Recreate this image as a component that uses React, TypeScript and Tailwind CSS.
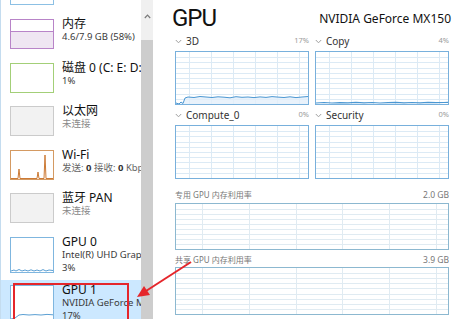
import React from "react";

type GP = {
  w: number;
  h: number;
  vOff: number;
  vStep: number;
  hN: number;
  grid: string;
  children?: React.ReactNode;
};

function GridSvg({ w, h, vOff, vStep, hN, grid, children }: GP) {
  const vs: number[] = [];
  for (let x = vOff; x < w; x += vStep) vs.push(Math.round(x) + 0.5);
  const hs: number[] = [];
  for (let i = 1; i < hN; i++) hs.push(Math.round((i * h) / hN) + 0.5);
  return (
    <svg width={w} height={h} className="block">
      {hs.map((y, i) => (
        <line key={"h" + i} x1={0} x2={w} y1={y} y2={y} stroke={grid} strokeWidth={1} />
      ))}
      {vs.map((x, i) => (
        <line key={"v" + i} x1={x} x2={x} y1={0} y2={h} stroke={grid} strokeWidth={1} />
      ))}
      {children}
    </svg>
  );
}

const Chev = () => (
  <svg width="7" height="5" viewBox="0 0 7 5" className="mr-[4px] shrink-0">
    <polyline points="0.8,1 3.5,3.8 6.2,1" fill="none" stroke="#a0a0a0" strokeWidth="1" />
  </svg>
);

function Item({
  thumb,
  title,
  lines,
  selected,
  h,
  th,
}: {
  thumb: React.ReactNode;
  title?: string;
  lines: React.ReactNode[];
  selected?: boolean;
  h: string;
  th: string;
}) {
  return (
    <div className={"flex shrink-0 pl-[9px] pt-[5px] " + h + " " + (selected ? "bg-[#cce8ff]" : "")}>
      <div className={"w-[44px] shrink-0 " + th}>{thumb}</div>
      <div className="ml-[8px] flex flex-col whitespace-nowrap mt-[-2px]">
        {title && <div className="text-[12px] leading-[14px] text-[#111]">{title}</div>}
        {lines.map((l, i) => (
          <div key={i} className="text-[9.5px] leading-[12.5px] text-[#3a3a3a]">
            {l}
          </div>
        ))}
      </div>
    </div>
  );
}

const pts3D =
  "0,51 3,52 5,50 7,51.5 9,46 12,45 18,45.5 24,44.5 30,45 36,45.5 42,44.8 48,45.2 54,45.8 60,44.7 66,45.3 72,45 78,45.6 84,44.9 90,45.4 96,44.6 102,45.1 108,45.5 114,44.8 120,45.6 126,45 132,44.5";
const ptsCopy =
  "0,51 8,50.5 16,51 24,50.6 32,50.9 40,50.4 48,50.8 56,50.5 64,51 72,50.6 80,50.3 88,50.8 96,50.5 104,50.9 112,50.4 120,50.7 128,50.5 132,50.3";

export default function App() {
  const engGrid = "#dceaf5";
  const engBorder = "border-[#78b0dc]";
  const memGrid = "#e0ebf2";
  const memBorder = "border-[#8cb8d0]";
  return (
    <div className="relative w-[465px] h-[319px] overflow-hidden bg-white flex font-['Noto_Sans','Noto_Sans_CJK_SC',sans-serif]">
      <div className="w-[1px] shrink-0 bg-[#c4dcef]" />
      {/* sidebar */}
      <div className="w-[140px] shrink-0 overflow-hidden">
        <div className="mt-[-30px] flex flex-col">
          <Item
            h="h-[44px]"
            th="h-[30px]"
            thumb={<div className="w-full h-full border border-[#8cc0e4] bg-white" />}
            lines={[]}
          />
          <Item
            h="h-[44px]"
            th="h-[30px]"
            thumb={
              <div className="w-full h-full border border-[#b884c8] bg-white flex flex-col">
                <div className="flex-1" />
                <div className="h-[17px] bg-[#efe6f2] border-t border-[#b884c8]" />
              </div>
            }
            title="内存"
            lines={["4.6/7.9 GB (58%)"]}
          />
          <Item
            h="h-[43px]"
            th="h-[30px]"
            thumb={<div className="w-full h-full border border-[#a3cf78] bg-white" />}
            title="磁盘 0 (C: E: D:)"
            lines={["1%"]}
          />
          <Item
            h="h-[44px]"
            th="h-[30px]"
            thumb={<div className="w-full h-full border border-[#cbcbcb] bg-[#f2f2f2]" />}
            title="以太网"
            lines={[<span className="text-[#8a8a8a]">未连接</span>]}
          />
          <Item
            h="h-[43px]"
            th="h-[30px]"
            thumb={
              <div className="w-full h-full border border-[#d49a62] bg-white">
                <svg width="42" height="28" className="block">
                  <polyline
                    points="0,27.5 7,27.5 8,18 9,27.5 26,27.5 27,21 28,27.5 33,27.5 34,4 35,27.5 42,27.5"
                    fill="none"
                    stroke="#cc7a35"
                    strokeWidth="1"
                  />
                </svg>
              </div>
            }
            title="Wi-Fi"
            lines={[
              <span className="text-[#666]">
                发送: <b className="text-[#333]">0</b> 接收: <b className="text-[#333]">0</b> Kbps
              </span>,
            ]}
          />
          <Item
            h="h-[44px]"
            th="h-[30px]"
            thumb={<div className="w-full h-full border border-[#cbcbcb] bg-[#f2f2f2]" />}
            title="蓝牙 PAN"
            lines={[<span className="text-[#8a8a8a]">未连接</span>]}
          />
          <Item
            h="h-[48px]"
            th="h-[36px]"
            thumb={
              <div className="w-full h-full border border-[#7fb6df] bg-white">
                <svg width="42" height="34" className="block">
                  <polyline
                    points="0,33 3,32 5,33 8,31.5 11,33 14,32 17,33 20,31.8 23,33 26,32 29,33 32,31.6 35,33 38,32 42,32.5"
                    fill="none"
                    stroke="#5b9fd3"
                    strokeWidth="1"
                  />
                </svg>
              </div>
            }
            title="GPU 0"
            lines={["Intel(R) UHD Graphics 620", "3%"]}
          />
          <Item
            selected
            h="h-[48px]"
            th="h-[36px]"
            thumb={
              <div className="w-full h-full border border-[#7fb6df] bg-white">
                <svg width="42" height="34" className="block">
                  <polyline
                    points="0,33 4,32 8,29 12,28.5 18,29 24,28.6 30,29 36,28.4 42,28.8"
                    fill="none"
                    stroke="#5b9fd3"
                    strokeWidth="1"
                  />
                </svg>
              </div>
            }
            title="GPU 1"
            lines={["NVIDIA GeForce MX150", "17%"]}
          />
        </div>
      </div>
      {/* scrollbar */}
      <div className="w-[12px] shrink-0 flex flex-col bg-[#f0f0f0]">
        <div className="h-[40px] flex justify-center pt-[14px]">
          <svg width="7" height="5" viewBox="0 0 7 5">
            <polyline points="0.8,4 3.5,1.2 6.2,4" fill="none" stroke="#7a7a7a" strokeWidth="1.2" />
          </svg>
        </div>
        <div className="flex-1 bg-[#cdcdcd]" />
      </div>
      {/* main */}
      <div className="flex-1 pl-[22px] pr-[16px] flex flex-col">
        <div className="h-[31px] flex items-start justify-between">
          <div className="pt-[5px] ml-[-3px] text-[24px] leading-[26px] font-normal tracking-[-1px] text-[#111] font-['Roboto',sans-serif]">
            GPU
          </div>
          <div className="pt-[12px] mr-[-2px] text-[12px] leading-[14px] text-[#111]">NVIDIA GeForce MX150</div>
        </div>
        <div className="grid grid-cols-2 gap-x-[6px]">
          <div className="flex flex-col">
            <div className="h-[20px] flex items-center justify-between">
              <div className="flex items-center text-[10px] text-[#333]">
                <Chev />3D
              </div>
              <div className="text-[7.5px] text-[#9a9a9a]">17%</div>
            </div>
            <div className={"h-[54px] border bg-white " + engBorder}>
              <GridSvg w={132} h={52} vOff={13} vStep={22} hN={10} grid={engGrid}>
                <polygon points={pts3D + " 132,52 0,52"} fill="#e3effa" opacity="0.8" />
                <polyline points={pts3D} fill="none" stroke="#4b97d2" strokeWidth="1" />
              </GridSvg>
            </div>
          </div>
          <div className="flex flex-col">
            <div className="h-[20px] flex items-center justify-between">
              <div className="flex items-center text-[10px] text-[#333]">
                <Chev />Copy
              </div>
              <div className="text-[7.5px] text-[#9a9a9a]">4%</div>
            </div>
            <div className={"h-[54px] border bg-white " + engBorder}>
              <GridSvg w={132} h={52} vOff={13} vStep={22} hN={10} grid={engGrid}>
                <polyline points={ptsCopy} fill="none" stroke="#4b97d2" strokeWidth="1.2" />
              </GridSvg>
            </div>
          </div>
          <div className="flex flex-col">
            <div className="h-[20px] flex items-center justify-between">
              <div className="flex items-center text-[10px] text-[#333]">
                <Chev />Compute_0
              </div>
              <div className="text-[7.5px] text-[#9a9a9a]">0%</div>
            </div>
            <div className={"h-[54px] border bg-white " + engBorder}>
              <GridSvg w={132} h={52} vOff={13} vStep={22} hN={10} grid={engGrid} />
            </div>
          </div>
          <div className="flex flex-col">
            <div className="h-[20px] flex items-center justify-between">
              <div className="flex items-center text-[10px] text-[#333]">
                <Chev />Security
              </div>
              <div className="text-[7.5px] text-[#9a9a9a]">0%</div>
            </div>
            <div className={"h-[54px] border bg-white " + engBorder}>
              <GridSvg w={132} h={52} vOff={13} vStep={22} hN={10} grid={engGrid} />
            </div>
          </div>
        </div>
        <div className="h-[24px] flex items-end justify-between pb-[3px] text-[8px] leading-[10px] text-[#777]">
          <div>专用 GPU 内存利用率</div>
          <div className="text-[8.5px]">2.0 GB</div>
        </div>
        <div className={"h-[47px] border bg-white " + memBorder}>
          <GridSvg w={272} h={45} vOff={26} vStep={46.8} hN={9} grid={memGrid} />
        </div>
        <div className="h-[17px] flex items-end justify-between pb-[2px] text-[8px] leading-[10px] text-[#777]">
          <div>共享 GPU 内存利用率</div>
          <div className="text-[8.5px]">3.9 GB</div>
        </div>
        <div className={"h-[48px] border bg-white " + memBorder}>
          <GridSvg w={272} h={46} vOff={26} vStep={46.8} hN={9} grid={memGrid} />
        </div>
      </div>
      {/* annotation */}
      <div className="absolute left-[13px] top-[283px] w-[116px] h-[44px] border-2 border-[#e5262b]" />
      <svg className="absolute left-0 top-0 pointer-events-none" width="465" height="319">
        <line x1="191" y1="262" x2="146" y2="291" stroke="#e5262b" strokeWidth="2" />
        <polygon points="137,297 150,295 144,286" fill="#e5262b" />
      </svg>
    </div>
  );
}
